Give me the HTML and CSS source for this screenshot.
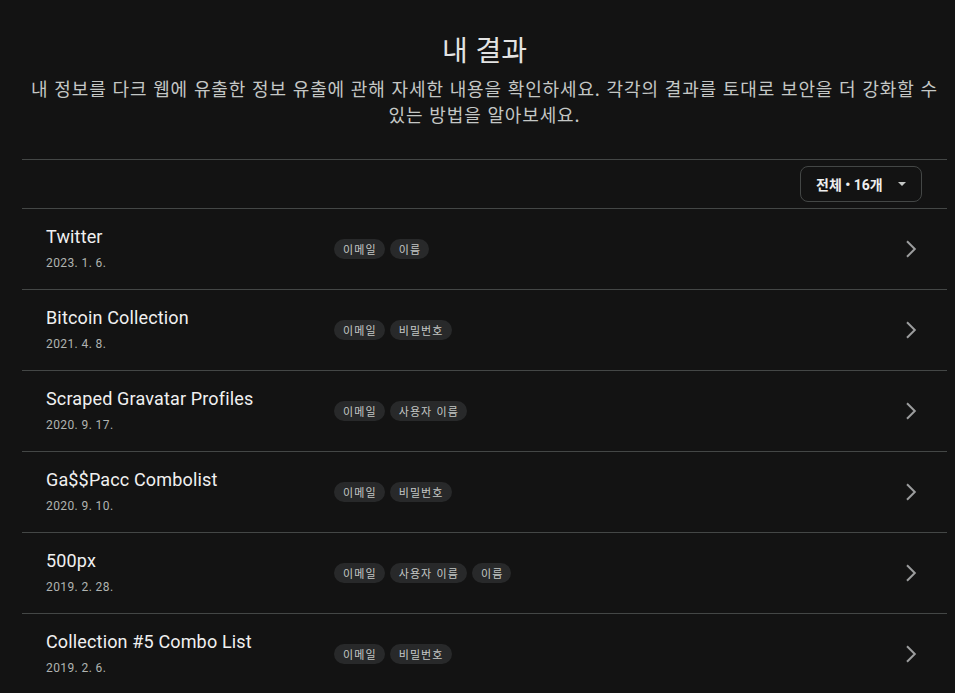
FILE: index.html
```html
<!DOCTYPE html>
<html lang="ko">
<head>
<meta charset="utf-8">
<link rel="stylesheet" href="styles.css">
</head>
<body>
<main class="page">
  <header class="intro">
    <h1 class="title">내 결과</h1>
    <p class="subtitle">내 정보를 다크 웹에 유출한 정보 유출에 관해 자세한 내용을 확인하세요. 각각의 결과를 토대로 보안을 더 강화할 수 있는 방법을 알아보세요.</p>
  </header>
  <div class="filter-row">
    <button class="dropdown"><span>전체 • 16개</span><span class="caret"></span></button>
  </div>
  <ul class="list">
    <li class="row">
      <div class="info"><div class="name">Twitter</div><div class="date">2023. 1. 6.</div></div>
      <div class="chips"><span class="chip">이메일</span><span class="chip">이름</span></div>
      <svg class="chev" width="24" height="24" viewBox="0 0 24 24"><path d="M8 4.2 15.8 12 8 19.8" fill="none" stroke="currentColor" stroke-width="2"/></svg>
    </li>
    <li class="row">
      <div class="info"><div class="name">Bitcoin Collection</div><div class="date">2021. 4. 8.</div></div>
      <div class="chips"><span class="chip">이메일</span><span class="chip">비밀번호</span></div>
      <svg class="chev" width="24" height="24" viewBox="0 0 24 24"><path d="M8 4.2 15.8 12 8 19.8" fill="none" stroke="currentColor" stroke-width="2"/></svg>
    </li>
    <li class="row">
      <div class="info"><div class="name">Scraped Gravatar Profiles</div><div class="date">2020. 9. 17.</div></div>
      <div class="chips"><span class="chip">이메일</span><span class="chip">사용자 이름</span></div>
      <svg class="chev" width="24" height="24" viewBox="0 0 24 24"><path d="M8 4.2 15.8 12 8 19.8" fill="none" stroke="currentColor" stroke-width="2"/></svg>
    </li>
    <li class="row">
      <div class="info"><div class="name">Ga$$Pacc Combolist</div><div class="date">2020. 9. 10.</div></div>
      <div class="chips"><span class="chip">이메일</span><span class="chip">비밀번호</span></div>
      <svg class="chev" width="24" height="24" viewBox="0 0 24 24"><path d="M8 4.2 15.8 12 8 19.8" fill="none" stroke="currentColor" stroke-width="2"/></svg>
    </li>
    <li class="row">
      <div class="info"><div class="name">500px</div><div class="date">2019. 2. 28.</div></div>
      <div class="chips"><span class="chip">이메일</span><span class="chip">사용자 이름</span><span class="chip">이름</span></div>
      <svg class="chev" width="24" height="24" viewBox="0 0 24 24"><path d="M8 4.2 15.8 12 8 19.8" fill="none" stroke="currentColor" stroke-width="2"/></svg>
    </li>
    <li class="row">
      <div class="info"><div class="name">Collection #5 Combo List</div><div class="date">2019. 2. 6.</div></div>
      <div class="chips"><span class="chip">이메일</span><span class="chip">비밀번호</span></div>
      <svg class="chev" width="24" height="24" viewBox="0 0 24 24"><path d="M8 4.2 15.8 12 8 19.8" fill="none" stroke="currentColor" stroke-width="2"/></svg>
    </li>
  </ul>
</main>
</body>
</html>
```

FILE: styles.css
```css
* { box-sizing: border-box; }
html, body { margin: 0; padding: 0; background: #131313; }
body {
  color: #e3e3e3;
  font-family: Roboto, "Noto Sans CJK KR", sans-serif;
  overflow: hidden;
}
.page {
  width: 925px;
  margin-left: 22px;
  padding-top: 31px;
}
.intro { text-align: center; padding-bottom: 32px; }
.title {
  margin: 0;
  font-family: "Noto Sans CJK KR", sans-serif;
  font-weight: 400;
  font-size: 28px;
  line-height: 36px;
  color: #e3e3e3;
}
.subtitle {
  margin: 8px 0 0;
  font-family: "Noto Sans CJK KR", sans-serif;
  font-size: 18px;
  line-height: 26px;
  letter-spacing: 0.85px;
  color: #c4c7c5;
}
.filter-row {
  border-top: 1px solid #444746;
  border-bottom: 1px solid #444746;
  height: 50px;
  display: flex;
  justify-content: flex-end;
  align-items: center;
  padding-right: 25px;
}
.dropdown {
  height: 36px;
  width: 122px;
  border: 1px solid #444746;
  border-radius: 8px;
  background: transparent;
  color: #eeeeee;
  display: flex;
  align-items: center;
  padding: 0 15px 0 15px;
  justify-content: space-between;
  font-family: Roboto, "Noto Sans CJK KR", sans-serif;
  font-size: 14px;
  font-weight: 700;
}
.caret {
  width: 0; height: 0;
  border-left: 4px solid transparent;
  border-right: 4px solid transparent;
  border-top: 4px solid #c4c7c5;
}
.list { list-style: none; margin: 0; padding: 0; }
.row {
  height: 81px;
  border-bottom: 1px solid #444746;
  display: flex;
  align-items: center;
  padding-left: 24px;
  padding-right: 24px;
}
.info { width: 288px; flex: none; padding-bottom: 1px; }
.name {
  font-size: 18px;
  font-weight: 400;
  line-height: 22px;
  color: #f0f0f0;
  letter-spacing: 0.15px;
}
.date {
  margin-top: 7px;
  font-size: 12px;
  line-height: 16px;
  letter-spacing: 0.4px;
  color: #b0b3b1;
}
.chips { flex: 1; display: flex; gap: 5px; }
.chip {
  height: 20px;
  padding: 0 8px 0 9px;
  border-radius: 10px;
  background: #28292a;
  color: #c4c7c5;
  font-family: "Noto Sans CJK KR", sans-serif;
  font-size: 11px;
  line-height: 20px;
  letter-spacing: 1.1px;
}
.chev { color: #9c9d9e; flex: none; }
```
